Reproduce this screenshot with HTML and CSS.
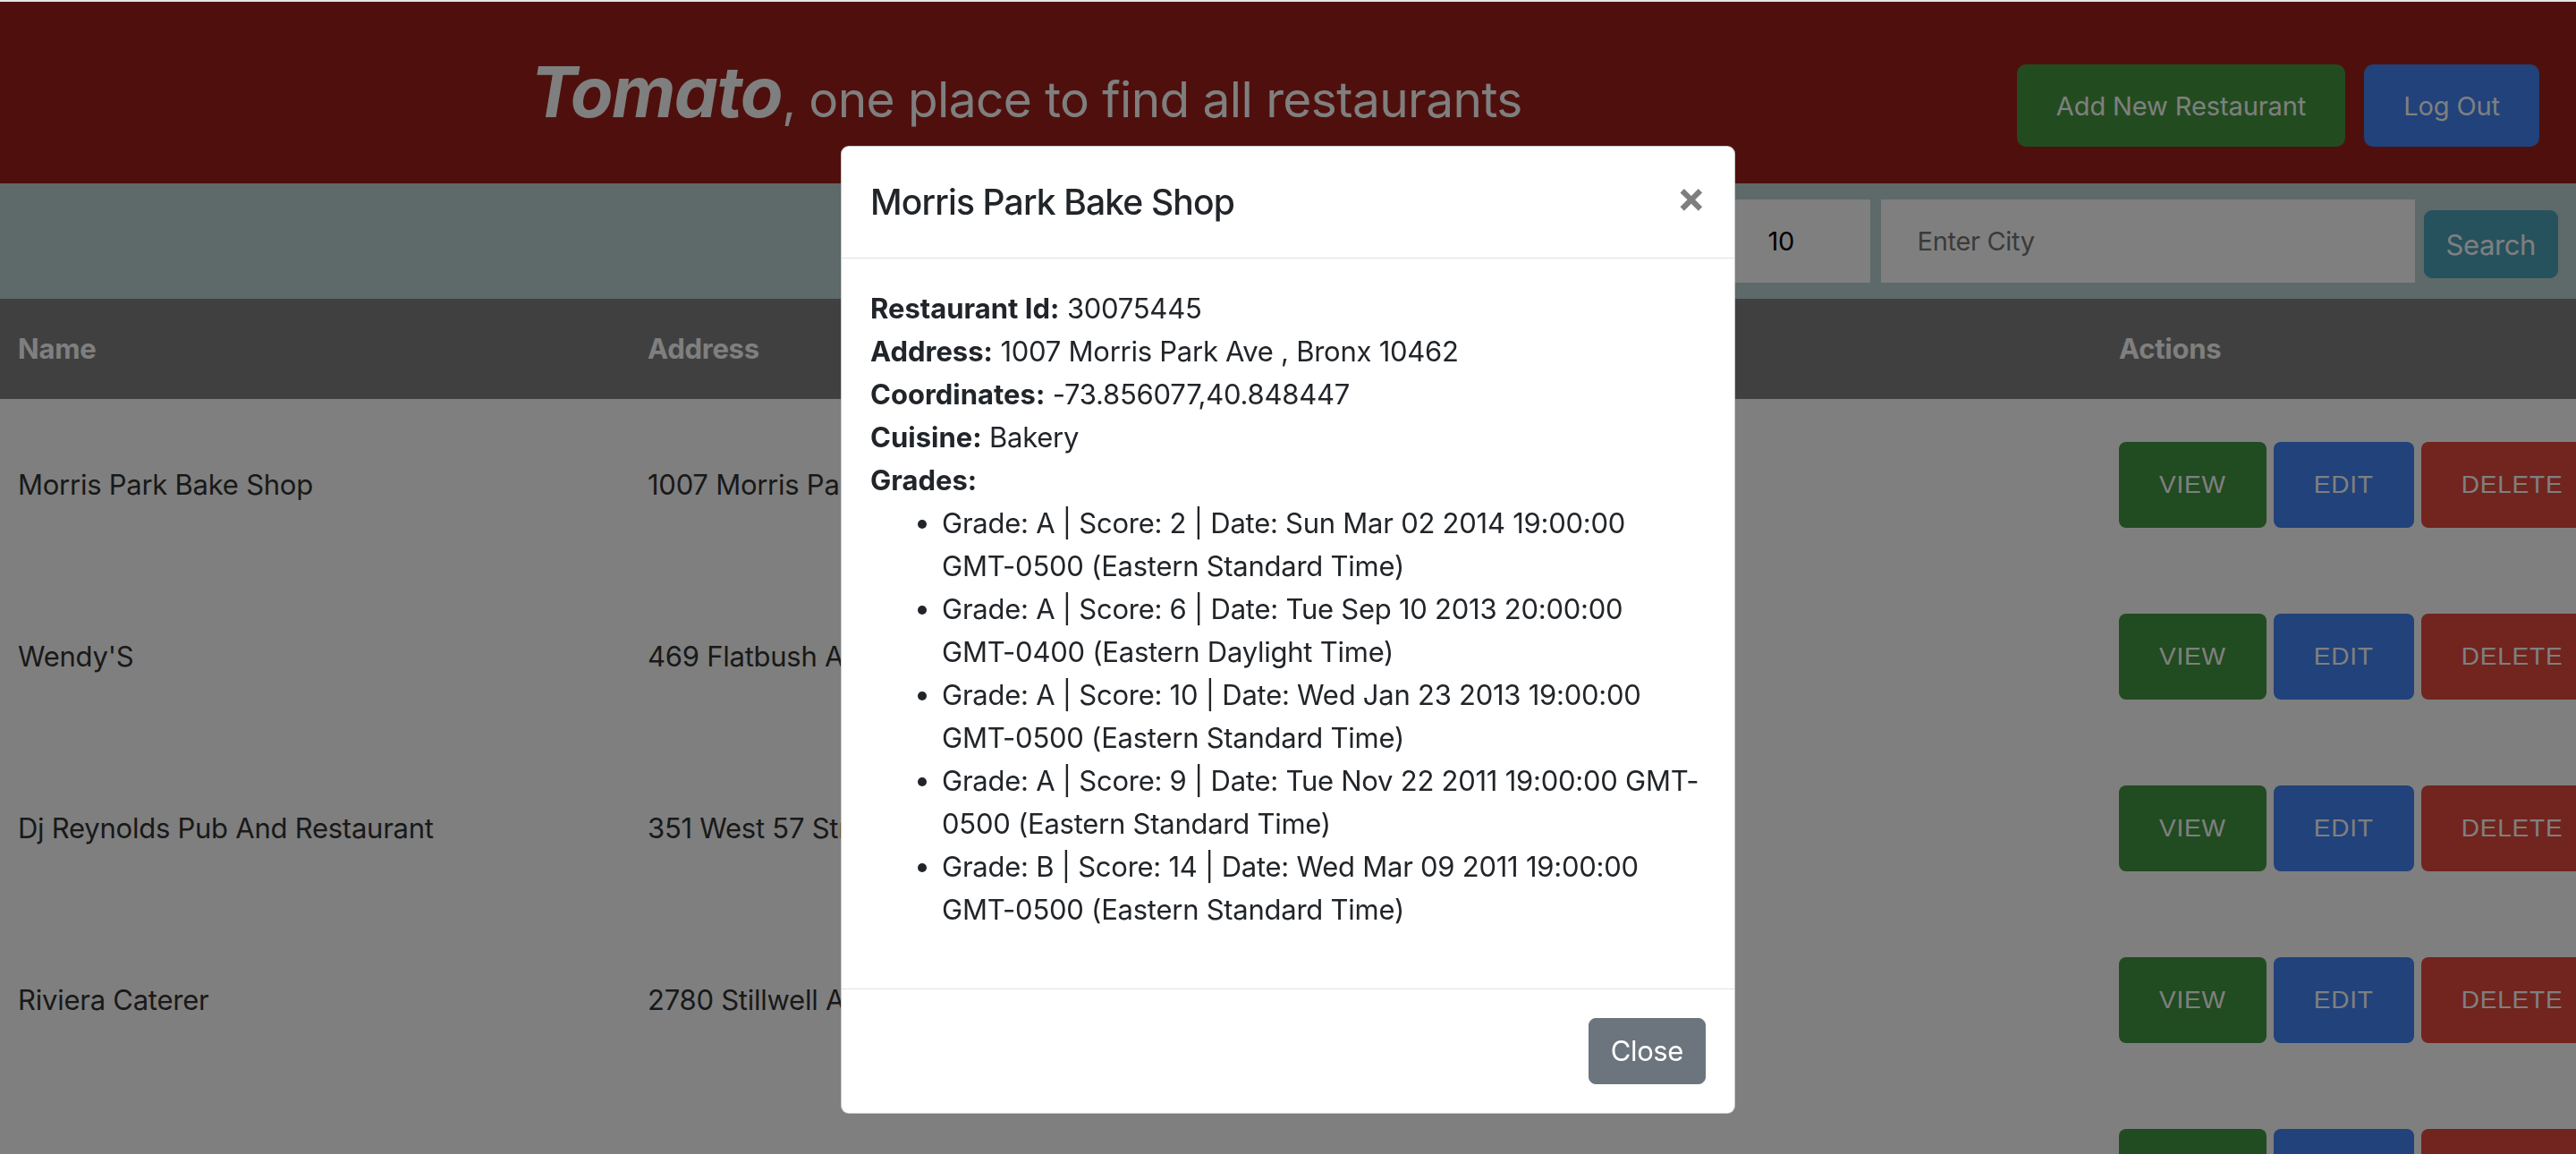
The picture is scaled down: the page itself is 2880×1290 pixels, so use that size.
FILE: index.html
```html
<!DOCTYPE html>
<html lang="en">
<head>
<meta charset="utf-8">
<title>Tomato</title>
<link rel="stylesheet" href="styles.css">
</head>
<body class="modal-open">
<div class="window-edge"></div>
<header class="topbar">
  <div class="brand">
    <h1 class="brand-title"><span class="brand-name">Tomato</span><span class="brand-tagline">, one place to find all restaurants</span></h1>
  </div>
  <div class="top-actions">
    <button class="btn-top btn-add" type="button">Add New Restaurant</button>
    <button class="btn-top btn-logout" type="button">Log Out</button>
  </div>
</header>
<form class="searchbar">
  <input class="field field-page" type="text" value="1">
  <input class="field field-size" type="text" value="10">
  <input class="field field-city" type="text" placeholder="Enter City">
  <button class="btn-search" type="button">Search</button>
</form>
<table class="restaurants">
  <colgroup>
    <col class="col-name"><col class="col-address"><col class="col-borough"><col class="col-cuisine"><col class="col-actions">
  </colgroup>
  <thead>
    <tr><th>Name</th><th>Address</th><th>Borough</th><th>Cuisine</th><th>Actions</th></tr>
  </thead>
  <tbody>
    <tr><td>Morris Park Bake Shop</td><td>1007 Morris Park Ave</td><td>Bronx</td><td>Bakery</td><td><div class="actions"><button class="act act-view" type="button">View</button><button class="act act-edit" type="button">Edit</button><button class="act act-delete" type="button">Delete</button></div></td></tr>
    <tr><td>Wendy'S</td><td>469 Flatbush Avenue</td><td>Brooklyn</td><td>Hamburgers</td><td><div class="actions"><button class="act act-view" type="button">View</button><button class="act act-edit" type="button">Edit</button><button class="act act-delete" type="button">Delete</button></div></td></tr>
    <tr><td>Dj Reynolds Pub And Restaurant</td><td>351 West 57 Street</td><td>Manhattan</td><td>Irish</td><td><div class="actions"><button class="act act-view" type="button">View</button><button class="act act-edit" type="button">Edit</button><button class="act act-delete" type="button">Delete</button></div></td></tr>
    <tr><td>Riviera Caterer</td><td>2780 Stillwell Avenue</td><td>Brooklyn</td><td>American</td><td><div class="actions"><button class="act act-view" type="button">View</button><button class="act act-edit" type="button">Edit</button><button class="act act-delete" type="button">Delete</button></div></td></tr>
    <tr><td>Tov Kosher Kitchen</td><td>97-22 63 Road</td><td>Queens</td><td>Jewish/Kosher</td><td><div class="actions"><button class="act act-view" type="button">View</button><button class="act act-edit" type="button">Edit</button><button class="act act-delete" type="button">Delete</button></div></td></tr>
    <tr><td>Brunos On The Boulevard</td><td>8825 Astoria Boulevard</td><td>Queens</td><td>American</td><td><div class="actions"><button class="act act-view" type="button">View</button><button class="act act-edit" type="button">Edit</button><button class="act act-delete" type="button">Delete</button></div></td></tr>
  </tbody>
</table>

<div class="backdrop"></div>
<div class="modal" role="dialog">
  <div class="modal-dialog">
    <div class="modal-content">
      <div class="modal-header">
        <h5 class="modal-title">Morris Park Bake Shop</h5>
        <button class="close" type="button" aria-label="Close">×</button>
      </div>
      <div class="modal-body">
        <p><b>Restaurant Id:</b> 30075445</p>
        <p><b>Address:</b> 1007 Morris Park Ave , Bronx 10462</p>
        <p><b>Coordinates:</b> -73.856077,40.848447</p>
        <p><b>Cuisine:</b> Bakery</p>
        <p><b>Grades:</b></p>
        <ul class="grades">
          <li>Grade: A | Score: 2 | Date: Sun Mar 02 2014 19:00:00 GMT-0500 (Eastern Standard Time)</li>
          <li>Grade: A | Score: 6 | Date: Tue Sep 10 2013 20:00:00 GMT-0400 (Eastern Daylight Time)</li>
          <li>Grade: A | Score: 10 | Date: Wed Jan 23 2013 19:00:00 GMT-0500 (Eastern Standard Time)</li>
          <li>Grade: A | Score: 9 | Date: Tue Nov 22 2011 19:00:00 GMT-0500 (Eastern Standard Time)</li>
          <li>Grade: B | Score: 14 | Date: Wed Mar 09 2011 19:00:00 GMT-0500 (Eastern Standard Time)</li>
        </ul>
      </div>
      <div class="modal-footer">
        <button class="btn-close" type="button">Close</button>
      </div>
    </div>
  </div>
</div>
</body>
</html>
```

FILE: styles.css
```css
* { box-sizing: border-box; }

html, body { margin: 0; }

body {
  font-family: Inter, "Liberation Sans", sans-serif;
  font-size: 31px;
  line-height: 48px;
  letter-spacing: -0.25px;
  color: #212529;
  background: #fff;
}

.modal-open { overflow: hidden; }

.window-edge {
  position: fixed;
  top: 0;
  left: 0;
  right: 0;
  height: 2px;
  background: #e6e6e6;
  z-index: 2000;
}

/* ---------- top bar ---------- */
.topbar {
  display: flex;
  align-items: flex-start;
  height: 205px;
  padding: 0 41px 0 40px;
  background: #9e201a;
}

.brand { flex: 1; text-align: center; }

.brand-title {
  margin: 55px 0 0;
  font-size: 78px;
  font-weight: 400;
  line-height: 96px;
  color: #fff;
  white-space: nowrap;
}

.brand-name {
  font-weight: 700;
  font-style: italic;
  letter-spacing: -1.5px;
}

.brand-tagline {
  font-size: 55px;
  letter-spacing: -0.6px;
}

.top-actions {
  display: flex;
  gap: 21px;
  margin-top: 72px;
}

.btn-top {
  height: 92px;
  padding: 0 44px;
  border: 0;
  border-radius: 10px;
  font-family: Inter, sans-serif;
  font-size: 29px;
  line-height: 1;
  letter-spacing: -0.1px;
  color: #fff;
}

.btn-add { background: #449840; }
.btn-logout { background: #4285f4; }

/* ---------- search bar ---------- */
.searchbar {
  display: flex;
  justify-content: flex-end;
  align-items: flex-start;
  gap: 12px;
  height: 129px;
  margin: 0;
  padding: 18px 20px;
  background: #bcd2d2;
}

.field {
  height: 93px;
  padding: 0 20px 0 41px;
  border: 0;
  border-radius: 0;
  background: #fff;
  font-family: Inter, sans-serif;
  font-size: 29px;
  letter-spacing: -0.3px;
  color: #000;
}

.field::placeholder { color: #757575; }

.field-page, .field-size { width: 155px; }
.field-city { width: 597px; }

.btn-search {
  height: 76px;
  margin: 12px 0 0 -2px;
  padding: 0 24px;
  border: 1px solid #4ca4bd;
  border-radius: 9px;
  background: #4ca4bd;
  font-family: Inter, sans-serif;
  font-size: 31px;
  line-height: 1;
  letter-spacing: -0.4px;
  color: #fff;
}

/* ---------- table ---------- */
.restaurants {
  table-layout: fixed;
  width: 2931px;
  border-collapse: collapse;
}

.col-name { width: 704px; }
.col-address { width: 600px; }
.col-borough { width: 300px; }
.col-cuisine { width: 745px; }
.col-actions { width: 582px; }

.restaurants th {
  height: 112px;
  padding: 0 20px;
  background: #808080;
  color: #fff;
  font-weight: 700;
  text-align: left;
  vertical-align: middle;
}

.restaurants td {
  padding: 48px 20px;
  vertical-align: middle;
  white-space: nowrap;
  color: #333;
}

.actions { display: flex; gap: 8px; }

.act {
  height: 96px;
  padding: 0 45px;
  border: 0;
  border-radius: 8px;
  font-family: "Liberation Sans", Arial, sans-serif;
  font-size: 28px;
  line-height: 1;
  letter-spacing: 0.8px;
  text-transform: uppercase;
  color: #fff;
}

.act-view { background: #439640; }
.act-edit { background: #4285f4; }
.act-delete { background: #e4493f; }

/* ---------- modal ---------- */
.backdrop {
  position: fixed;
  inset: 0;
  background: #000;
  opacity: 0.5;
  z-index: 1040;
}

.modal {
  position: fixed;
  inset: 0;
  z-index: 1050;
  padding-top: 163px;
}

.modal-dialog {
  width: 1000px;
  margin: 0 auto;
}

.modal-content {
  background: #fff;
  border: 1px solid rgba(0, 0, 0, 0.2);
  border-radius: 9px;
}

.modal-header {
  display: flex;
  align-items: flex-start;
  justify-content: space-between;
  padding: 32px;
  border-bottom: 1px solid #dee2e6;
}

.modal-title {
  margin: 0;
  font-size: 39px;
  font-weight: 500;
  line-height: 60px;
  letter-spacing: -0.85px;
}

.close {
  margin: -32px -32px -32px auto;
  padding: 32px;
  border: 0;
  background: transparent;
  font-family: Inter, sans-serif;
  font-size: 48px;
  font-weight: 700;
  line-height: 48px;
  color: #000;
  opacity: 0.5;
}

.modal-body { padding: 32px; }

.modal-body p { margin: 0; }

.modal-body b { letter-spacing: 0; }

.grades {
  margin: 0 6px 32px 0;
  padding-left: 80px;
}

.modal-footer {
  display: flex;
  justify-content: flex-end;
  padding: 24px;
  border-top: 1px solid #dee2e6;
}

.btn-close {
  margin: 8px;
  padding: 12px 24px;
  border: 1px solid #6c757d;
  border-radius: 8px;
  background: #6c757d;
  font-family: Inter, sans-serif;
  font-size: 31px;
  line-height: 48px;
  letter-spacing: -0.4px;
  color: #fff;
}
```
